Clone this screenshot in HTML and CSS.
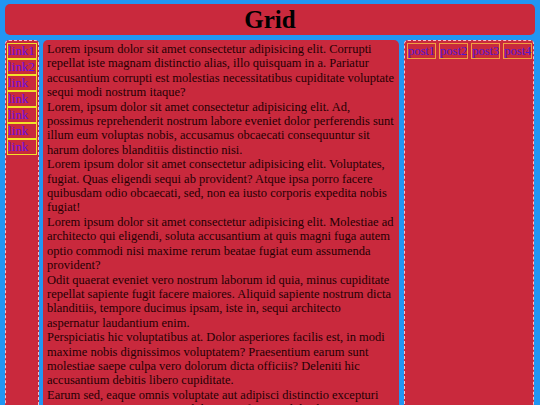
FILE: index.html
```html
<!DOCTYPE html>
<html>
<head>
<meta charset="utf-8">
<link rel="stylesheet" href="styles.css">
</head>
<body>
<div class="page">
  <header class="header"><h1 class="title">Grid</h1></header>
  <div class="grid">
    <nav class="sidebar">
      <a class="link" href="#">link1</a>
      <a class="link" href="#">link2</a>
      <a class="link" href="#">link</a>
      <a class="link" href="#">link</a>
      <a class="link" href="#">link</a>
      <a class="link" href="#">link</a>
      <a class="link" href="#">link</a>
    </nav>
    <main class="main">
      <p class="para">Lorem ipsum dolor sit amet consectetur adipisicing elit. Corrupti repellat iste magnam distinctio alias, illo quisquam in a. Pariatur accusantium corrupti est molestias necessitatibus cupiditate voluptate sequi modi nostrum itaque?</p>
      <p class="para">Lorem, ipsum dolor sit amet consectetur adipisicing elit. Ad, possimus reprehenderit nostrum labore eveniet dolor perferendis sunt illum eum voluptas nobis, accusamus obcaecati consequuntur sit harum dolores blanditiis distinctio nisi.</p>
      <p class="para">Lorem ipsum dolor sit amet consectetur adipisicing elit. Voluptates, fugiat. Quas eligendi sequi ab provident? Atque ipsa porro facere quibusdam odio obcaecati, sed, non ea iusto corporis expedita nobis fugiat!</p>
      <p class="para">Lorem ipsum dolor sit amet consectetur adipisicing elit. Molestiae ad architecto qui eligendi, soluta accusantium at quis magni fuga autem optio commodi nisi maxime rerum beatae fugiat eum assumenda provident?</p>
      <p class="para">Odit quaerat eveniet vero nostrum laborum id quia, minus cupiditate repellat sapiente fugit facere maiores. Aliquid sapiente nostrum dicta blanditiis, tempore ducimus ipsam, iste in, sequi architecto aspernatur laudantium enim.</p>
      <p class="para">Perspiciatis hic voluptatibus at. Dolor asperiores facilis est, in modi maxime nobis dignissimos voluptatem? Praesentium earum sunt molestiae saepe culpa vero dolorum dicta officiis? Deleniti hic accusantium debitis libero cupiditate.</p>
      <p class="para">Earum sed, eaque omnis voluptate aut adipisci distinctio excepturi quisquam, minima nesciunt dolore ipsa fuga sit doloribus ratione.</p>
    </main>
    <aside class="aside">
      <div class="posts">
        <a class="post" href="#">post1</a>
        <a class="post" href="#">post2</a>
        <a class="post" href="#">post3</a>
        <a class="post" href="#">post4</a>
      </div>
    </aside>
  </div>
</div>
</body>
</html>
```
FILE: styles.css
```css
html, body {
  margin: 0;
  padding: 0;
  background: #2196f3;
  font-family: "Liberation Serif", "Times New Roman", serif;
  font-size: 12.5px;
}
.page {
  padding: 4px 5px 0 5px;
}
.header {
  background: #c9293d;
  border-radius: 5px;
  padding: 2px 0 1px;
  text-align: center;
}
.title {
  margin: 0;
  font-size: 25px;
  font-weight: bold;
  color: #000;
}
.grid {
  margin-top: 5px;
  display: grid;
  grid-template-columns: 34px 356px 131px;
  column-gap: 4px;
  align-items: stretch;
  min-height: 380px;
}
.grid > .aside {
  margin-left: 1px;
}
.sidebar {
  background: #c9293d;
  border: 1px dashed rgba(255, 220, 225, 0.85);
  border-radius: 4px;
  padding: 2px 1px;
  display: flex;
  flex-direction: column;
}
.link {
  display: block;
  border: 1px solid #f2e12a;
  color: #6a10e0;
  text-decoration: none;
  font-size: 13px;
  line-height: 14px;
  white-space: nowrap;
}
.main {
  background: #c9293d;
  border-radius: 5px;
  padding: 2px 4px;
  color: #260003;
}
.para {
  margin: 0;
  line-height: 14.4px;
}
.aside {
  background: #c9293d;
  border: 1px dashed rgba(255, 220, 225, 0.85);
  border-radius: 4px;
  padding: 2px 2px;
}
.posts {
  display: flex;
  gap: 3px;
}
.post {
  display: block;
  border: 1px solid #f0a040;
  color: #5018d0;
  text-decoration: none;
  line-height: 14.4px;
  white-space: nowrap;
}
```
